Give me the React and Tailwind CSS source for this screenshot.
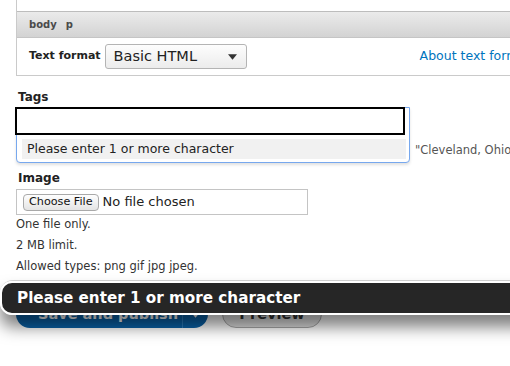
import React from 'react'

// Drupal node form fragment with autocomplete tooltip overlay
function ChevronDown({ className = '' }) {
  return (
    <svg className={className} viewBox="0 0 10 6" fill="currentColor">
      <path d="M0 0h10L5 6z" />
    </svg>
  )
}

export default function App() {
  return (
    <div className="relative w-[510px] h-[366px] overflow-hidden bg-white text-[#333] font-['DejaVu_Sans',sans-serif]">
      {/* editor panel */}
      <div className="ml-4 w-[560px] border-l border-b border-[#cacaca]">
        <div className="h-3 border-b border-[#bdbdbd]" />
        <div className="h-[26px] flex items-center gap-[9px] pl-3 bg-gradient-to-b from-[#ebebeb] to-[#d3d3d3] border-b border-[#c5c5c5] text-[10px] font-bold text-[#4a4a4a]">
          <span>body</span>
          <span>p</span>
        </div>
        <div className="h-[37px] flex items-center pl-3">
          <span className="text-[11px] font-bold text-[#222]">Text format</span>
          <div className="ml-[4px] w-[142px] h-[25px] flex items-center justify-between pl-2 pr-[9px] border border-[#b4b4b4] rounded-[3px] bg-gradient-to-b from-[#fdfdfd] to-[#ececec]">
            <span className="text-[14.5px] text-[#222]">Basic HTML</span>
            <ChevronDown className="w-[9px] h-[6px] text-[#333]" />
          </div>
          <span className="ml-[173px] text-[12.5px] text-[#0074bd] whitespace-nowrap">About text formats</span>
        </div>
      </div>

      {/* tags */}
      <div className="mt-[14px] pl-[18px] text-[12px] font-bold text-[#222] leading-[15px]">Tags</div>
      <div className="relative mt-[2px] ml-[15px] w-[390px]">
        <div className="h-[28px] border-2 border-black bg-white relative z-10" />
        <div className="absolute left-[1px] top-0 w-[394px] h-[56px] border border-[#77a8ee] rounded-b-[4px] bg-white shadow-[0_2px_3px_rgba(0,0,0,0.12)] pt-[31px] pl-[5px] pr-[3px] z-[5]">
          <div className="h-[20px] bg-[#f1f1f1] flex items-center pl-[5px] text-[12.5px] text-[#222]">
            Please enter 1 or more character
          </div>
        </div>
      </div>
      <p className="mt-[5px] pl-[16px] flex whitespace-nowrap text-[11.5px] text-[#555] leading-[20px]">
        <span className="shrink-0 w-[399px]">
          <span className="block w-[390px] overflow-hidden">Enter a comma-separated list. For example: Amsterdam, Mexico City,</span>
        </span>
        <span className="shrink-0">"Cleveland, Ohio", Dallas</span>
      </p>

      {/* image */}
      <div className="mt-[11px] pl-[18px] text-[12px] font-bold text-[#222] leading-[15px]">Image</div>
      <div className="mt-[3px] ml-4 w-[292px] h-[26px] border border-[#c4c4c4] flex items-center pl-[6px] gap-[4px]">
        <div className="h-[17px] px-[5px] flex items-center rounded-[4px] border border-[#a9a9a9] bg-gradient-to-b from-[#fefefe] to-[#e4e4e4] text-[11.2px] text-[#111]">
          Choose File
        </div>
        <span className="text-[13px] text-[#222]">No file chosen</span>
      </div>
      <div className="-mt-px pl-4 text-[11.5px] text-[#333] leading-[21px]">
        <p>One file only.</p>
        <p>2 MB limit.</p>
        <p>Allowed types: png gif jpg jpeg.</p>
      </div>

      {/* actions */}
      <div className="mt-[20px] ml-4 flex items-center gap-[14px]">
        <div className="h-[31px] w-[192px] flex items-center rounded-[14px] bg-[#0a62a8] text-white text-[14.5px] font-bold">
          <span className="flex-1 pl-[22px] pt-[5px]">Save and publish</span>
          <span className="h-full w-[26px] border-l border-[#2d7fc0] flex items-center justify-center pt-[5px]">
            <ChevronDown className="w-[9px] h-[6px]" />
          </span>
        </div>
        <div className="h-[31px] w-[100px] flex items-center justify-center pt-[5px] rounded-[14px] border border-[#a8a8a8] bg-gradient-to-b from-[#f6f6f6] to-[#dedede] text-[14.5px] font-bold text-[#333]">
          Preview
        </div>
      </div>

      {/* tooltip */}
      <div className="absolute left-0 top-[280px] w-[540px] h-[35px] rounded-l-[13px] border-t border-[#cfcfcf] shadow-[0_12px_16px_rgba(0,0,0,0.5)]">
        <div className="h-full rounded-l-[12px] border-2 border-white bg-[#262626] flex items-center pl-[15px] text-[15.2px] font-bold text-white">
          Please enter 1 or more character
        </div>
      </div>
    </div>
  )
}
